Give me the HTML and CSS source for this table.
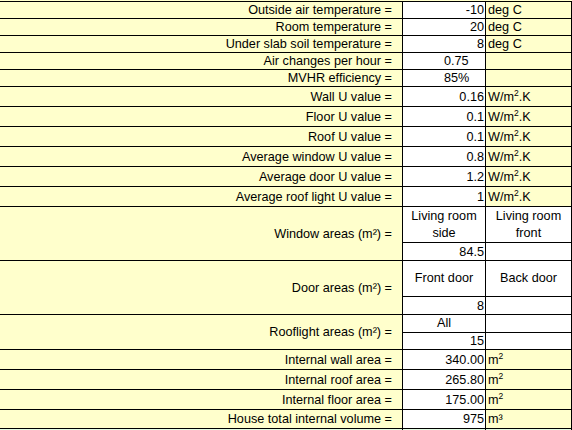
FILE: index.html
```html
<!DOCTYPE html>
<html>
<head>
<meta charset="utf-8">
<link rel="stylesheet" href="styles.css">
</head>
<body>
<div class="sheet">
  <div class="c lbl">Outside air temperature =</div><div class="c val">-10</div><div class="c unit">deg C</div>
  <div class="c lbl">Room temperature =</div><div class="c val">20</div><div class="c unit">deg C</div>
  <div class="c lbl">Under slab soil temperature =</div><div class="c val">8</div><div class="c unit">deg C</div>
  <div class="c lbl">Air changes per hour =</div><div class="c val left">0.75</div><div class="c unit"></div>
  <div class="c lbl">MVHR efficiency =</div><div class="c val left">85%</div><div class="c unit"></div>
  <div class="c lbl">Wall U value =</div><div class="c val">0.16</div><div class="c unit"><span>W/m<sup>2</sup>.K</span></div>
  <div class="c lbl">Floor U value =</div><div class="c val">0.1</div><div class="c unit"><span>W/m<sup>2</sup>.K</span></div>
  <div class="c lbl">Roof U value =</div><div class="c val">0.1</div><div class="c unit"><span>W/m<sup>2</sup>.K</span></div>
  <div class="c lbl">Average window U value =</div><div class="c val">0.8</div><div class="c unit"><span>W/m<sup>2</sup>.K</span></div>
  <div class="c lbl">Average door U value =</div><div class="c val">1.2</div><div class="c unit"><span>W/m<sup>2</sup>.K</span></div>
  <div class="c lbl">Average roof light U value =</div><div class="c val">1</div><div class="c unit"><span>W/m<sup>2</sup>.K</span></div>

  <div class="c lbl span2">Window areas (m²) =</div><div class="c head">Living room side</div><div class="c head">Living room front</div>
  <div class="c val">84.5</div><div class="c blank"></div>

  <div class="c lbl span2">Door areas (m²) =</div><div class="c head">Front door</div><div class="c head">Back door</div>
  <div class="c val">8</div><div class="c blank"></div>

  <div class="c lbl span2">Rooflight areas (m²) =</div><div class="c head">All</div><div class="c blank"></div>
  <div class="c val">15</div><div class="c blank"></div>

  <div class="c lbl">Internal wall area =</div><div class="c val">340.00</div><div class="c unit"><span>m<sup>2</sup></span></div>
  <div class="c lbl">Internal roof area =</div><div class="c val">265.80</div><div class="c unit"><span>m<sup>2</sup></span></div>
  <div class="c lbl">Internal floor area =</div><div class="c val">175.00</div><div class="c unit"><span>m<sup>2</sup></span></div>
  <div class="c lbl">House total internal volume =</div><div class="c val">975</div><div class="c unit">m³</div>

  <div class="c green"></div><div class="c green"></div><div class="c green"></div>
</div>
</body>
</html>
```
FILE: styles.css
```css
html, body {
  margin: 0;
  padding: 0;
  background: #ffffcc;
}
.sheet {
  display: grid;
  grid-template-columns: 403px 83px 86px;
  grid-template-rows: 17px 17px 17px 17px 17px 20px 20px 20px 20px 20px 20px 36px 18px 36px 18px 18px 17px 20px 20px 20px 19px 20px;
  margin-top: 1px;
  border-top: 1px solid #000;
  font-family: "Liberation Sans", Arial, sans-serif;
  font-size: 12.67px;
  color: #000;
}
.c {
  box-sizing: border-box;
  border-right: 1px solid #000;
  border-bottom: 1px solid #000;
  display: flex;
  align-items: center;
  white-space: nowrap;
  overflow: hidden;
}
.lbl {
  background: #ffffcc;
  justify-content: flex-end;
  padding-right: 10px;
}
.span2 {
  grid-row: span 2;
}
.val {
  background: #fff;
  justify-content: flex-end;
  padding-right: 1px;
}
.val.left {
  justify-content: flex-start;
  padding-left: 41px;
}
.unit {
  background: #ffffcc;
  padding-left: 2px;
}
.head {
  background: #fff;
  justify-content: center;
  text-align: center;
  white-space: normal;
  line-height: 17px;
  padding: 0 2px;
}
.blank {
  background: #fff;
}
.green {
  background: #e4fde4;
}
sup {
  font-size: 8.5px;
  line-height: 0;
  vertical-align: 5px;
}
```
